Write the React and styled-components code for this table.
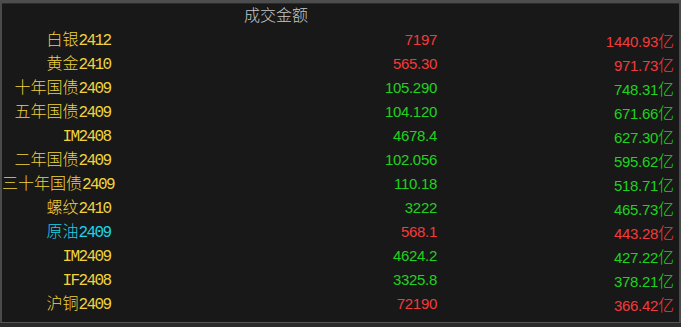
import React from 'react';
import styled, { createGlobalStyle } from 'styled-components';

const rows = [
  { name: '白银', code: '2412', price: '7197', amount: '1440.93', pc: 'up', ac: 'up' },
  { name: '黄金', code: '2410', price: '565.30', amount: '971.73', pc: 'up', ac: 'up' },
  { name: '十年国债', code: '2409', price: '105.290', amount: '748.31', pc: 'down', ac: 'down' },
  { name: '五年国债', code: '2409', price: '104.120', amount: '671.66', pc: 'down', ac: 'down' },
  { name: '', code: 'IM2408', price: '4678.4', amount: '627.30', pc: 'down', ac: 'down' },
  { name: '二年国债', code: '2409', price: '102.056', amount: '595.62', pc: 'down', ac: 'down' },
  { name: '三十年国债', code: '2409', price: '110.18', amount: '518.71', pc: 'down', ac: 'down' },
  { name: '螺纹', code: '2410', price: '3222', amount: '465.73', pc: 'down', ac: 'down' },
  { name: '原油', code: '2409', price: '568.1', amount: '443.28', pc: 'up', ac: 'up', hot: true },
  { name: '', code: 'IM2409', price: '4624.2', amount: '427.22', pc: 'down', ac: 'down' },
  { name: '', code: 'IF2408', price: '3325.8', amount: '378.21', pc: 'down', ac: 'down' },
  { name: '沪铜', code: '2409', price: '72190', amount: '366.42', pc: 'up', ac: 'up' },
];

const colors = {
  up: '#f23b3b',
  down: '#1fd21f',
  name: '#f0d23c',
  hot: '#1ed2e6',
};

const Global = createGlobalStyle`
  html, body {
    margin: 0;
    padding: 0;
    background: #2b2b2b;
  }
`;

const Frame = styled.div`
  width: 681px;
  height: 323px;
  box-sizing: border-box;
  background: #181818;
  border-top: 3px solid #4d4d4d;
  border-left: 2px solid #4a4a4a;
  border-right: 2px solid #4a4a4a;
  border-bottom: 1px solid #555;
  box-shadow: inset 0 1px 0 #2c2c2c;
  overflow: hidden;
`;

const Header = styled.div`
  height: 25px;
  line-height: 23px;
  padding-left: 242px;
  color: #c8c8c8;
  font-family: "Noto Sans CJK SC", sans-serif;
  font-size: 16px;
  font-weight: 300;
`;

const Table = styled.div`
  display: grid;
  grid-template-columns: 110px 325px 237px;
  grid-auto-rows: 24px;
`;

const Name = styled.div`
  line-height: 20px;
  padding-bottom: 4px;
  text-align: right;
  white-space: nowrap;
  color: ${p => (p.$hot ? colors.hot : colors.name)};
  font-family: "Noto Sans CJK SC", sans-serif;
  font-size: 16px;
  font-weight: 300;
`;

const Code = styled.span`
  font-family: "Liberation Mono", monospace;
  font-size: 16px;
  letter-spacing: -1.6px;
  margin-right: 1.6px;
`;

const Num = styled.div`
  line-height: 24px;
  text-align: right;
  white-space: nowrap;
  color: ${p => colors[p.$tone]};
  font-family: "Liberation Sans", sans-serif;
  font-size: 15px;
  letter-spacing: -0.3px;
`;

const Unit = styled.span`
  font-family: "Noto Sans CJK SC", sans-serif;
  font-size: 16px;
  font-weight: 300;
  letter-spacing: 0;
`;

export default function App() {
  return (
    <>
      <Global />
      <Frame>
        <Header>成交金额</Header>
        <Table>
          {rows.map((r, i) => (
            <React.Fragment key={i}>
              <Name $hot={r.hot}>
                {r.name}
                <Code>{r.code}</Code>
              </Name>
              <Num $tone={r.pc}>{r.price}</Num>
              <Num $tone={r.ac}>
                {r.amount}
                <Unit>亿</Unit>
              </Num>
            </React.Fragment>
          ))}
        </Table>
      </Frame>
    </>
  );
}
